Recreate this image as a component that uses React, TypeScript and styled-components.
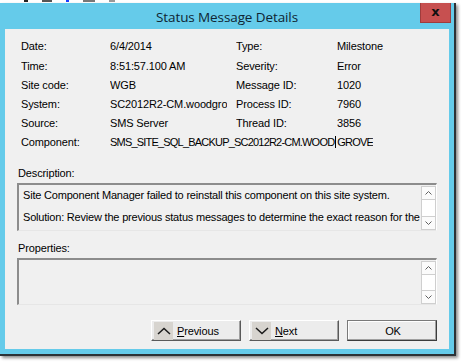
import styled, { createGlobalStyle } from "styled-components";

const GlobalStyle = createGlobalStyle`
  html, body {
    margin: 0;
    padding: 0;
    background: #ffffff;
  }
  body {
    font-family: "Liberation Sans", Arial, sans-serif;
    font-size: 11px;
    color: #000;
  }
`;

interface InfoRow {
  label: string;
  value: string;
  sideLabel?: string;
  sideValue?: string;
}

const rows: InfoRow[] = [
  { label: "Date:", value: "6/4/2014", sideLabel: "Type:", sideValue: "Milestone" },
  { label: "Time:", value: "8:51:57.100 AM", sideLabel: "Severity:", sideValue: "Error" },
  { label: "Site code:", value: "WGB", sideLabel: "Message ID:", sideValue: "1020" },
  { label: "System:", value: "SC2012R2-CM.woodgrove.com", sideLabel: "Process ID:", sideValue: "7960" },
  { label: "Source:", value: "SMS Server", sideLabel: "Thread ID:", sideValue: "3856" },
];

const Chevron = ({ up }: { up?: boolean }) => (
  <svg width="14" height="8" viewBox="0 0 14 8">
    <polyline
      points={up ? "1,7 7,1.5 13,7" : "1,1 7,6.5 13,1"}
      fill="none"
      stroke="#1a1a1a"
      strokeWidth="1.5"
    />
  </svg>
);

const SmallArrow = ({ up }: { up?: boolean }) => (
  <svg width="7" height="4" viewBox="0 0 7 4">
    <polyline
      points={up ? "0.5,3.5 3.5,0.5 6.5,3.5" : "0.5,0.5 3.5,3.5 6.5,0.5"}
      fill="none"
      stroke="#606060"
      strokeWidth="1"
    />
  </svg>
);

const ScrollBar = () => (
  <Scroll>
    <ScrollButton>
      <SmallArrow up />
    </ScrollButton>
    <ScrollTrack />
    <ScrollButton>
      <SmallArrow />
    </ScrollButton>
  </Scroll>
);

const App = () => {
  return (
    <Page>
      <GlobalStyle />
      <BehindStrip>
        <Mark $w={4} $c="#222" />
        <Mark $w={10} $c="#555" />
        <Mark $w={3} $c="#1a3cff" />
        <Mark $w={12} $c="#777" />
        <Mark $w={6} $c="#999" />
      </BehindStrip>
      <Window>
        <TitleBar>
          <span />
          <Title>Status Message Details</Title>
          <CloseButton>x</CloseButton>
        </TitleBar>
        <Client>
          <InfoGrid>
            {rows.map((row) => (
              <InfoLine key={row.label}>
                <Cell>{row.label}</Cell>
                <Cell>{row.value}</Cell>
                <span />
                <Cell>{row.sideLabel}</Cell>
                <Cell>{row.sideValue}</Cell>
              </InfoLine>
            ))}
            <InfoLine>
              <Cell>Component:</Cell>
              <WideValue>
                SMS_SITE_SQL_BACKUP_SC2012R2-CM.WOOD<Caret />GROVEBANK.COM
              </WideValue>
            </InfoLine>
          </InfoGrid>

          <SectionLabel $top={15}>Description:</SectionLabel>
          <TextBox $height={48}>
            <BoxText>
              Site Component Manager failed to reinstall this component on this site system.
              <br />
              <br />
              Solution: Review the previous status messages to determine the exact reason for the
              failure.
            </BoxText>
            <ScrollBar />
          </TextBox>

          <SectionLabel $top={11}>Properties:</SectionLabel>
          <TextBox $height={47}>
            <BoxText />
            <ScrollBar />
          </TextBox>

          <ButtonRow>
            <DialogButton>
              <IconBox>
                <Chevron up />
              </IconBox>
              <ButtonText>
                <u>P</u>revious
              </ButtonText>
            </DialogButton>
            <DialogButton>
              <IconBox>
                <Chevron />
              </IconBox>
              <ButtonText>
                <u>N</u>ext
              </ButtonText>
            </DialogButton>
            <DialogButton $primary>
              <CenterText>OK</CenterText>
            </DialogButton>
          </ButtonRow>
        </Client>
      </Window>
    </Page>
  );
};

// Styling
const Page = styled.div`
  width: 461px;
  height: 362px;
  overflow: hidden;
  background: #ffffff;
`;

const BehindStrip = styled.div`
  height: 3px;
  display: flex;
  gap: 14px;
  padding-left: 24px;
`;

const Mark = styled.span<{ $w: number; $c: string }>`
  width: ${(p) => p.$w}px;
  height: 2px;
  background: ${(p) => p.$c};
`;

const Window = styled.div`
  width: 454px;
  height: 351px;
  background: #65cbea;
  border-right: 2px solid #2c3236;
  border-bottom: 2px solid #2c3236;
  box-shadow: 2px 2px 3px rgba(0, 0, 0, 0.45);
  display: flex;
  flex-direction: column;
`;

const TitleBar = styled.div`
  height: 26px;
  display: grid;
  grid-template-columns: 1fr auto 1fr;
  align-items: center;
`;

const Title = styled.div`
  font-family: "Open Sans", "Liberation Sans", sans-serif;
  font-size: 13.5px;
  color: #0f2532;
  letter-spacing: -0.1px;
  padding-top: 1px;
`;

const CloseButton = styled.div`
  justify-self: end;
  align-self: start;
  width: 29px;
  height: 17px;
  margin-right: 3px;
  background: #c75050;
  border: 1px solid #a03c3c;
  border-top: none;
  display: flex;
  align-items: center;
  justify-content: center;
  font-family: "DejaVu Sans", sans-serif;
  font-weight: bold;
  font-size: 13px;
  line-height: 1;
  color: #111;
  padding-bottom: 2px;
  box-sizing: content-box;
`;

const Client = styled.div`
  margin: 0 5px 5px 5px;
  height: 320px;
  background: #f0f0f0;
  padding: 6px 12px 0 12px;
  box-sizing: border-box;
  display: flex;
  flex-direction: column;
  letter-spacing: -0.13px;
`;

const InfoGrid = styled.div`
  display: grid;
  grid-template-rows: 21px 19px 19px 19px 19px 20px;
  padding-left: 4px;
`;

const InfoLine = styled.div`
  display: grid;
  grid-template-columns: 89px 117px 9px 101px 1fr;
  align-items: center;
`;

const Cell = styled.div`
  white-space: nowrap;
  overflow: hidden;
`;

const WideValue = styled.div`
  grid-column: 2 / 6;
  width: 263px;
  white-space: nowrap;
  overflow: hidden;
  display: flex;
  align-items: center;
  letter-spacing: -0.8px;
`;

const Caret = styled.span`
  flex: none;
  width: 1px;
  height: 12px;
  margin: 0 1px;
  background: #000;
`;

const SectionLabel = styled.div<{ $top: number }>`
  margin-top: ${(p) => p.$top}px;
  padding-left: 1px;
  line-height: 13px;
  height: 13px;
  margin-bottom: 3px;
`;

const TextBox = styled.div<{ $height: number }>`
  height: ${(p) => p.$height}px;
  box-sizing: border-box;
  border-top: 2px solid #8c8c8c;
  border-left: 2px solid #8c8c8c;
  border-right: 1px solid #ffffff;
  border-bottom: 1px solid #e6e6e6;
  display: flex;
  align-items: flex-start;
  overflow: hidden;
`;

const BoxText = styled.div`
  flex: 1;
  height: 38px;
  box-sizing: border-box;
  padding: 5px 0 0 4px;
  line-height: 11px;
  letter-spacing: -0.2px;
  overflow: hidden;
`;

const Scroll = styled.div`
  width: 15px;
  align-self: stretch;
  margin-top: 1px;
  display: flex;
  flex-direction: column;
  background: #ffffff;
`;

const ScrollButton = styled.div`
  height: 14px;
  border: 1px solid #cfcfcf;
  background: #fbfbfb;
  box-sizing: border-box;
  display: flex;
  align-items: center;
  justify-content: center;
`;

const ScrollTrack = styled.div`
  flex: 1;
  border-left: 1px solid #cfcfcf;
  border-right: 1px solid #cfcfcf;
  background: #ffffff;
`;

const ButtonRow = styled.div`
  margin-top: auto;
  margin-bottom: 8px;
  display: flex;
  justify-content: flex-end;
  gap: 8px;
`;

const DialogButton = styled.button<{ $primary?: boolean }>`
  width: 90px;
  height: 21px;
  padding: 0 0 0 2px;
  box-sizing: border-box;
  display: flex;
  align-items: center;
  gap: 4px;
  background: #ececec;
  font: inherit;
  letter-spacing: inherit;
  color: #000;
  border: 1px solid;
  border-color: ${(p) =>
    p.$primary ? "#7a7a7a #3c3c3c #3c3c3c #7a7a7a" : "#ffffff #5a5a5a #5a5a5a #ffffff"};
  box-shadow: inset -1px -1px 0 #a0a0a0
    ${(p) => (p.$primary ? ", inset 1px 1px 0 #ffffff" : "")};
`;

const IconBox = styled.span`
  width: 19px;
  height: 18px;
  background: #d7d4cf;
  display: flex;
  align-items: center;
  justify-content: center;
`;

const ButtonText = styled.span`
  padding-top: 1px;
`;

const CenterText = styled.span`
  flex: 1;
  text-align: center;
`;

export default App;
